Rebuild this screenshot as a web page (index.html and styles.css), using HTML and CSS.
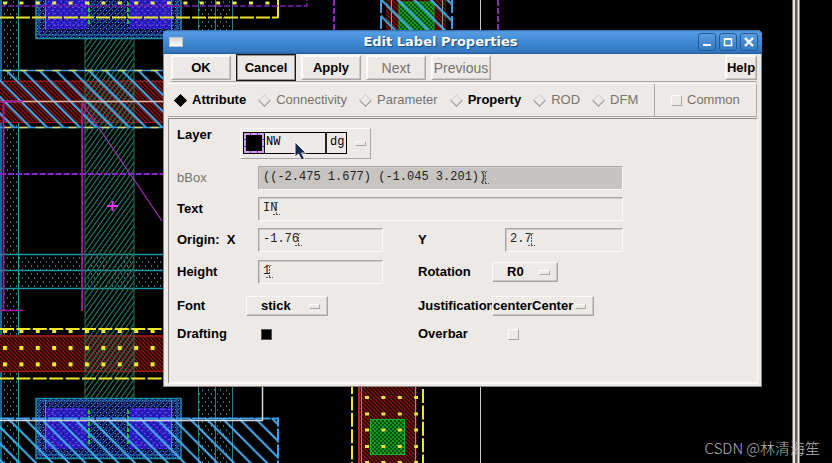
FILE: index.html
```html
<!DOCTYPE html>
<html lang="en">
<head>
<meta charset="utf-8">
<title>Edit Label Properties</title>
<link rel="stylesheet" href="styles.css">
</head>
<body>
<main class="desktop">
<svg class="layout" viewBox="0 0 832 463" preserveAspectRatio="xMinYMin slice" aria-hidden="true">
  <defs>
    <pattern id="dots" width="6" height="8" patternUnits="userSpaceOnUse">
      <path d="M1 1h1v2h-1zM4 5h1v2h-1z" fill="#237a84"/>
    </pattern>
    <pattern id="green" width="5" height="7" patternUnits="userSpaceOnUse">
      <path d="M-1 8.400L6 -1.400M-1 1.400L1 -1.400M4 8.400L6 5.600" stroke="#1f7560" stroke-width="1.200"/>
    </pattern>
    <pattern id="red" width="4" height="4" patternUnits="userSpaceOnUse">
      <rect width="4" height="4" fill="#260303"/>
      <path d="M-1 -1L5 5M-1 3L1 5M3 -1L5 1" stroke="#8e1a12" stroke-width="1.1"/>
    </pattern>
    <pattern id="cut" width="16.5" height="16.5" patternUnits="userSpaceOnUse" x="6" y="4">
      <path d="M-2 -2L19 19M-2 14.500L2 18.500M14.500 -2L18.500 2" stroke="#44b0f4" stroke-width="2"/>
    </pattern>
    <pattern id="blue" width="6" height="6" patternUnits="userSpaceOnUse">
      <rect width="6" height="6" fill="#2a1cc0"/>
      <path d="M0 1h2v1h-2zM3 4h2v1h-2z" fill="#5a4cea"/>
      <path d="M3 1h1v2h-1zM1 4h1v1h-1z" fill="#15106b"/>
    </pattern>
    <pattern id="navy" width="6" height="6" patternUnits="userSpaceOnUse">
      <rect width="6" height="6" fill="#050a38"/>
      <path d="M-1 7L7 -1" stroke="#2a52b8" stroke-width="1.3"/>
      <path d="M1 1h1v1h-1zM4 4h1v1h-1z" fill="#42b0b4"/>
    </pattern>
    <pattern id="leaf" width="4" height="4" patternUnits="userSpaceOnUse">
      <rect width="4" height="4" fill="#064d10"/>
      <path d="M0 0h2v2h-2zM2 2h2v2h-2z" fill="#109a1c"/>
    </pattern>
    <pattern id="vias" width="16.4" height="16.4" patternUnits="userSpaceOnUse" x="3" y="346">
      <rect width="4" height="4" fill="#f2ee28"/>
    </pattern>
    <g id="device">
      <rect x="36" y="398.500" width="145" height="60" fill="url(#navy)" stroke="#1c8ea6" stroke-width="1.5"/>
      <rect x="39" y="401" width="138" height="54" fill="none" stroke="#2878b4"/>
      <rect x="45" y="408" width="43" height="41" fill="url(#blue)"/>
      <rect x="129" y="408" width="42" height="41" fill="url(#blue)"/>
      <path d="M45.500 400v50M171.500 400v50" stroke="#388ccc"/>
      <path d="M53 409h29v36h-29zM136 409h29v36h-29z" fill="none" stroke="#7448e0" stroke-dasharray="2 2"/>
      <path d="M89 410v36M128 410v36" stroke="#10c838" stroke-width="2" stroke-dasharray="4 2"/>
    </g>
  </defs>
  <rect width="832" height="463" fill="#000"/>

  <rect x="2" width="16" height="463" fill="url(#dots)"/>
  <path d="M1 0V463" stroke="#17688a" stroke-width="2"/>
  <path d="M18.500 0V463" stroke="#2a97ac" stroke-width="1"/>
  <path d="M198.500 0V463M215.500 0V463M232.500 0V463" stroke="#22818e"/>
  <rect x="199" width="33" height="463" fill="url(#dots)"/>

  <rect x="0" y="80" width="163" height="43" fill="url(#red)"/>
  <path d="M0 81.500H163M0 122.500H163" stroke="#981710"/>
  <rect x="0" y="335" width="163" height="37" fill="url(#red)"/>
  <path d="M0 336H163M0 371.500H163" stroke="#a01b14" stroke-width="1.5"/>

  <rect x="18" y="255" width="145" height="33" fill="url(#dots)"/>
  <path d="M0 254.500H163M0 270.500H163M0 288.500H163" stroke="#1f97a7" stroke-width="1.3"/>

  <rect x="85" y="38" width="49" height="361" fill="url(#green)"/>
  <path d="M85 38V399M134 38V399" stroke="#2a705c"/>

  <rect x="0" y="70" width="163" height="57" fill="url(#cut)"/>
  <path d="M0 70.500H163M0 127.500H163" stroke="#3c9ee0" stroke-width="1.5"/>
  <path d="M3 70.500H163M3 127.500H163" stroke="#d8d468" stroke-width="1.5" stroke-dasharray="8 8.400"/>
  <path d="M0 101.500H163" stroke="#eab8ac" stroke-width="1.5"/>

  <path d="M0 174H163" stroke="#8427c8" stroke-width="2" stroke-dasharray="6 2"/>
  <path d="M0 101.500H23M3.500 101V310M0 310.500H23M82 311V103" fill="none" stroke="#aa1ca8" stroke-width="1.7"/>
  <path d="M82 103L162 221" stroke="#a22db0" stroke-width="1.3"/>
  <path d="M107 206H118M112.500 201V211" stroke="#ec34f5" stroke-width="2"/>

  <use href="#device"/>
  <use href="#device" y="-420"/>

  <path d="M0 17.500H278" fill="none" stroke="#eee332" stroke-width="2" stroke-dasharray="14 2"/>
  <path d="M278 0V18" stroke="#eee332" stroke-width="2"/>
  <path d="M0 6H307V0" fill="none" stroke="#7623b0" stroke-width="1.500" stroke-dasharray="6 2"/>
  <path d="M3 3H272" stroke="#eeea42" stroke-width="3" stroke-dasharray="4 12.400"/>

  <path d="M0 329H163M0 378.500H163" stroke="#f0e62c" stroke-width="2" stroke-dasharray="14 2.400"/>
  <path d="M3 331.500H163" stroke="#f0e62c" stroke-width="3" stroke-dasharray="4 12.400"/>
  <rect x="0" y="346" width="163" height="22" fill="url(#vias)"/>

  <rect x="0" y="418" width="278" height="45" fill="url(#cut)"/>
  <path d="M0 418.500H278V463" fill="none" stroke="#3aa0ee" stroke-width="2" stroke-dasharray="14 2"/>
  <path d="M0 420.500H262.500V386" fill="none" stroke="#d4d9dd" stroke-width="1.500"/>

  <path d="M334 0V30M498 0V30" stroke="#8d28c4" stroke-width="2" stroke-dasharray="6 2"/>
  <path d="M480.500 0V463" stroke="#c8c8c8" stroke-width="1"/>

  <g>
    <rect x="386" y="0" width="60" height="30" fill="url(#red)"/>
    <path d="M391.500 0V30M442.500 0V30" stroke="#8b9ea0"/>
    <rect x="399" y="2" width="35" height="30" fill="url(#leaf)" stroke="#12a81d"/>
    <rect x="381" y="0" width="71" height="30" fill="url(#cut)"/>
    <path d="M381 0V30M452 0V30" stroke="#369fe5" stroke-width="2" stroke-dasharray="13 3"/>
  </g>
  <g>
    <rect x="358" y="386" width="59" height="77" fill="url(#red)"/>
    <path d="M359 386V463" stroke="#af261a" stroke-width="2"/>
    <path d="M361.500 386V463M415.500 386V463" stroke="#6b9ea8"/>
    <rect x="370.500" y="419.500" width="34" height="35" fill="url(#leaf)" stroke="#12b51c"/>
    <path d="M365 397.500H418M365 414H418M365 430H418M365 446.500H418M365 462.500H418" stroke="#eee636" stroke-width="3" stroke-dasharray="4 12.400"/>
    <path d="M352 380V463M423 389V463" stroke="#f1e521" stroke-width="2" stroke-dasharray="14 2.400"/>
  </g>

  <path d="M794 0V463" stroke="#eadfdb" stroke-width="3"/>
  <path d="M796.500 0V463" stroke="#625b5b" stroke-width="2"/>
  <path d="M798.500 0V463" stroke="#f7f5f4" stroke-width="2"/>
</svg>

<section class="dialog" aria-labelledby="dialog-title">
  <header class="titlebar">
    <span class="sysmenu"></span>
    <h1 class="title" id="dialog-title">Edit Label Properties</h1>
    <div class="window-buttons">
      <button class="winbtn" type="button" aria-label="Minimize"><svg viewBox="0 0 16 16"><path d="M4 11h8" stroke="#fff" stroke-width="2"/></svg></button>
      <button class="winbtn" type="button" aria-label="Maximize"><svg viewBox="0 0 16 16"><path d="M4.500 5h7v6.500h-7z" fill="none" stroke="#fff" stroke-width="1.500"/><path d="M4 5h8" stroke="#fff" stroke-width="2"/></svg></button>
      <button class="winbtn" type="button" aria-label="Close"><svg viewBox="0 0 16 16"><path d="M4 4l8 8M12 4l-8 8" stroke="#fff" stroke-width="2.400"/></svg></button>
    </div>
  </header>

  <div class="actions">
    <button class="action" type="button">OK</button>
    <button class="action action-default" type="button">Cancel</button>
    <button class="action" type="button">Apply</button>
    <button class="action" type="button" disabled>Next</button>
    <button class="action" type="button" disabled>Previous</button>
    <button class="action action-help" type="button">Help</button>
  </div>

  <div class="modes">
    <div class="mode-list">
      <label class="choice"><input class="diamond" type="radio" name="mode" checked>Attribute</label>
      <label class="choice off"><input class="diamond" type="radio" name="mode" disabled>Connectivity</label>
      <label class="choice off"><input class="diamond" type="radio" name="mode" disabled>Parameter</label>
      <label class="choice"><input class="diamond" type="radio" name="mode">Property</label>
      <label class="choice off"><input class="diamond" type="radio" name="mode" disabled>ROD</label>
      <label class="choice off"><input class="diamond" type="radio" name="mode" disabled>DFM</label>
    </div>
    <div class="mode-common">
      <label class="choice off"><input class="box" type="checkbox" disabled>Common</label>
    </div>
  </div>

  <form class="fields">
    <label class="name name-top" for="layer">Layer</label>
    <div class="control wide">
      <button class="layer" id="layer" type="button">
        <span class="layer-item"><span class="swatch"></span><span class="layer-name">NW</span><span class="layer-purpose">dg</span></span>
        <span class="tab"></span>
        <svg class="pointer" viewBox="0 0 14 20" aria-hidden="true"><path d="M2 1v15l3.500-3 3 6 3-1.500-3-5.500h4.500z" fill="#192652" stroke="#f4f4f4" stroke-width="1"/></svg>
      </button>
    </div>

    <label class="name off" for="bbox">bBox</label>
    <div class="control wide inset">
      <div class="entry entry-off"><input id="bbox" type="text" value="((-2.475 1.677) (-1.045 3.201))" readonly><svg class="caret" style="--chars:31" viewBox="0 0 7 15"><path d="M1 1.500h2l.5 1 .5-1h2M3.500 2v11M0 13.500h7" /></svg></div>
    </div>

    <label class="name" for="text">Text</label>
    <div class="control wide inset">
      <div class="entry"><input id="text" type="text" value="IN"><svg class="caret" style="--chars:2" viewBox="0 0 7 15"><path d="M1 1.500h2l.5 1 .5-1h2M3.500 2v11M0 13.500h7" /></svg></div>
    </div>

    <label class="name" for="x">Origin:&nbsp; X</label>
    <div class="control inset">
      <div class="entry"><input id="x" type="text" value="-1.76"><svg class="caret" style="--chars:5" viewBox="0 0 7 15"><path d="M1 1.500h2l.5 1 .5-1h2M3.500 2v11M0 13.500h7" /></svg></div>
    </div>
    <label class="name second" for="y">Y</label>
    <div class="control inset-small">
      <div class="entry"><input id="y" type="text" value="2.7"><svg class="caret" style="--chars:3" viewBox="0 0 7 15"><path d="M1 1.500h2l.5 1 .5-1h2M3.500 2v11M0 13.500h7" /></svg></div>
    </div>

    <label class="name" for="height">Height</label>
    <div class="control inset">
      <div class="entry"><input id="height" type="text" value="1"><svg class="caret" style="--chars:1" viewBox="0 0 7 15"><path d="M1 1.500h2l.5 1 .5-1h2M3.500 2v11M0 13.500h7" /></svg></div>
    </div>
    <label class="name second" for="rotation">Rotation</label>
    <div class="control">
      <div class="option option-narrow"><select id="rotation"><option>R0</option></select><span class="tab"></span></div>
    </div>

    <label class="name" for="font">Font</label>
    <div class="control inset-tiny">
      <div class="option option-mid"><select id="font"><option>stick</option></select><span class="tab"></span></div>
    </div>
    <label class="name second" for="just">Justification</label>
    <div class="control">
      <div class="option option-long"><select id="just"><option>centerCenter</option></select><span class="tab"></span></div>
    </div>

    <label class="name" for="drafting">Drafting</label>
    <div class="control inset"><input class="box" id="drafting" type="checkbox" checked></div>
    <label class="name second" for="overbar">Overbar</label>
    <div class="control inset-small"><input class="box" id="overbar" type="checkbox"></div>
  </form>
</section>

<p class="credit">CSDN @林清海笙</p>
</main>
</body>
</html>
```
FILE: styles.css
```css
:root {
  --face: #ede9e6;
  --light: #fbfaf9;
  --shade: #aaa5a2;
  --muted: #777371;
}

* { box-sizing: border-box; }

body {
  margin: 0;
  background: #000;
  color: #000;
  font: bold 13px/16px "Liberation Sans", Arial, sans-serif;
}

button, select { font: inherit; color: inherit; }

.desktop {
  position: relative;
  min-height: 100vh;
  overflow: hidden;
}

.layout {
  position: absolute;
  inset: 0;
  width: 100%;
  height: 100%;
}

.dialog {
  position: absolute;
  top: 30px;
  left: 163px;
  right: 70px;
  padding-bottom: 2px;
  background: var(--face);
  border: 1px solid #8c8885;
  border-top: 0;
  border-radius: 5px 5px 0 0;
}

.titlebar {
  display: flex;
  align-items: center;
  height: 24px;
  margin: 0 -1px;
  padding: 0 4px 0 6px;
  background: linear-gradient(#2c68a8, #559ce2 2px, #3f88d4 50%, #3378c0 90%, #235a94);
  border-radius: 5px 5px 0 0;
}

.sysmenu {
  width: 14px;
  height: 10px;
  background: linear-gradient(#d8d6d2, #fff);
  border: 1px solid #bcc3ca;
}

.title {
  flex: 1;
  margin: 0;
  color: #fff;
  font: bold 13px/16px "DejaVu Sans", sans-serif;
  text-align: center;
  text-shadow: 1px 1px 1px #1d4573;
}

.window-buttons { display: flex; gap: 3px; }

.winbtn {
  width: 18px;
  height: 18px;
  padding: 0;
  background: linear-gradient(#5a9de0, #3579c2);
  border: 1px solid #245a96;
  border-radius: 3px;
}

.winbtn svg { display: block; width: 16px; height: 16px; }

.actions {
  display: flex;
  align-items: center;
  gap: 5px;
  height: 28px;
  margin: 0 4px 0 7px;
  border-bottom: 1px solid var(--shade);
}

.action {
  width: 60px;
  height: 25px;
  padding: 0;
  background: var(--face);
  border: 1px solid;
  border-color: var(--light) var(--shade) var(--shade) var(--light);
  box-shadow: inset 1px 1px var(--light), inset -1px -1px #cbc7c4;
}

.action-default { height: 27px; border: 1px solid #181818; box-shadow: inset 0 0 0 1px #99928f; }
.action-help { width: 32px; margin-left: auto; }

.off { color: var(--muted); font-weight: 400; }

.action:disabled {
  color: var(--muted);
  font-size: 14px;
  font-weight: 400;
}

.modes {
  display: flex;
  height: 34px;
  margin: 1px 4px 0;
  border-right: 1px solid var(--shade);
  border-bottom: 1px solid var(--shade);
  border-top: 1px solid var(--light);
}

.mode-list {
  display: flex;
  flex: 1;
  align-items: center;
  gap: 12px;
  padding-left: 6px;
}

.mode-common {
  display: flex;
  align-items: center;
  width: 102px;
  padding-left: 16px;
  border-left: 1px solid var(--shade);
}

.choice { display: flex; align-items: center; gap: 5px; white-space: nowrap; }

.diamond {
  appearance: none;
  width: 9px;
  height: 9px;
  margin: 2px;
  background: var(--face);
  border: 1px solid;
  transform: rotate(45deg);
}

.diamond:checked { background: #000; border-color: #000; }
.diamond:not(:checked) { border-color: #d4d0cd #8f8b88 #8f8b88 #d4d0cd; }

.box {
  appearance: none;
  width: 11px;
  height: 11px;
  margin: 0;
  background: var(--face);
  border: 1px solid;
  border-color: var(--light) var(--shade) var(--shade) var(--light);
}

.box:checked { background: #000; border-color: #555; }

.fields {
  display: grid;
  grid-template-columns: 63px 143px 35px 74px 131px;
  grid-template-rows: 32px 24px 24px 24px 26px 28px 14px;
  row-gap: 7px;
  align-items: center;
  margin: 1px 3px 0 4px;
  padding: 8px 8px 41px 8px;
  border: 1px solid;
  border-color: #8f8b88 var(--light) var(--light) #8f8b88;
  border-bottom-width: 2px;
}

.name { grid-column: 1; white-space: nowrap; }
.name-top { align-self: start; }
.second { grid-column: 4; }
.control { position: relative; }
.wide { grid-column: 2 / -1; }
.inset { padding-left: 18px; }
.inset-small { padding-left: 13px; }
.inset-tiny { padding-left: 6px; }

.control .box { display: block; margin-left: 3px; }

.layer {
  position: relative;
  display: flex;
  align-items: center;
  gap: 8px;
  width: 131px;
  height: 31px;
  padding: 0 0 0 2px;
  background: var(--face);
  border: 1px solid;
  border-color: var(--light) var(--shade) var(--shade) var(--light);
}

.layer-item {
  display: flex;
  width: 104px;
  height: 22px;
  border: 1px solid #000;
  font: 12px/19px "Liberation Mono", monospace;
  text-align: left;
}

.swatch {
  width: 20px;
  height: 20px;
  background: #000 content-box;
  border: 2px dashed #c9a2ee;
  background: linear-gradient(#000, #000) padding-box, #7a1cd0;
}

.layer-name { flex: 1; padding-left: 1px; border-left: 1px solid #000; }
.layer-purpose { width: 21px; padding-left: 3px; border-left: 2px solid #222; }

.pointer {
  position: absolute;
  left: 52px;
  top: 12px;
  width: 14px;
  height: 20px;
}

.tab {
  width: 11px;
  height: 5px;
  border: 1px solid;
  border-color: var(--light) var(--shade) var(--shade) var(--light);
  pointer-events: none;
}

.entry {
  position: relative;
  height: 24px;
  border: 1px solid;
  border-color: var(--shade) var(--light) var(--light) var(--shade);
  box-shadow: inset 1px 1px #cfcbc8;
  font: 12px/20px "Liberation Mono", monospace;
}

.entry input {
  display: block;
  width: 100%;
  height: 20px;
  padding: 0 4px;
  background: none;
  border: 0;
  color: #222;
  font: inherit;
}

.entry-off { background: #c8c4c1; }

.caret {
  position: absolute;
  top: 3px;
  left: calc(var(--chars) * 1ch);
  width: 7px;
  height: 15px;
  fill: none;
  stroke: #555;
  stroke-dasharray: 2 1;
}

.option {
  display: flex;
  align-items: center;
  height: 20px;
  background: var(--face);
  border: 1px solid;
  border-color: var(--light) var(--shade) var(--shade) var(--light);
  box-shadow: inset -1px -1px #cbc7c4;
}

.option select {
  appearance: none;
  flex: 1;
  min-width: 0;
  height: 18px;
  padding: 0;
  background: none;
  border: 0;
  line-height: 16px;
}

.option .tab { margin-right: 7px; }
.option-narrow { width: 66px; }
.option-narrow select { padding-left: 14px; }
.option-mid { width: 82px; }
.option-mid select { padding-left: 14px; }
.option-long { width: 102px; }

.credit {
  position: absolute;
  right: 12px;
  bottom: 5px;
  margin: 0;
  color: #b4b4b4;
  font: 300 15px/20px "Noto Sans CJK SC", sans-serif;
}
```
